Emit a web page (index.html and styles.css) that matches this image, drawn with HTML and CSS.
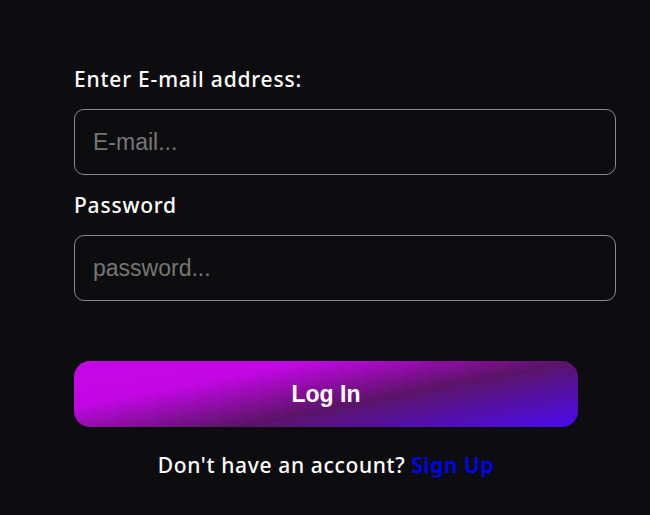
FILE: index.html
```html
<!DOCTYPE html>
<html lang="en">
<head>
<meta charset="utf-8">
<title>Log In</title>
<link rel="stylesheet" href="styles.css">
</head>
<body>
<form class="login-form">
  <label class="field-label" for="email">Enter E-mail address:</label>
  <input class="field-input" id="email" type="email" placeholder="E-mail...">
  <label class="field-label" for="password">Password</label>
  <input class="field-input" id="password" type="password" placeholder="password...">
  <div class="actions">
    <button class="login-btn" type="button">Log In</button>
    <p class="signup-text">Don't have an account? <a class="signup-link" href="#">Sign Up</a></p>
  </div>
</form>
</body>
</html>
```

FILE: styles.css
```css
html, body {
  margin: 0;
  padding: 0;
  background: #0d0d0f;
}

body {
  font-family: "Noto Sans", "Open Sans", sans-serif;
  color: #ffffff;
}

.login-form {
  width: 542px;
  margin-left: 74px;
  padding-top: 67px;
  display: flex;
  flex-direction: column;
  gap: 18px;
}

.field-label {
  display: block;
  height: 24px;
  line-height: 25px;
  font-size: 21px;
  font-weight: 500;
  letter-spacing: 0.8px;
  color: #ffffff;
}

.field-input {
  box-sizing: border-box;
  width: 542px;
  height: 66px;
  margin: 0;
  padding: 0 18px;
  border: 1px solid #8a8a8a;
  border-radius: 10px;
  background: #0d0d0f;
  color: #ffffff;
  font-family: "Liberation Sans", Arial, sans-serif;
  font-size: 23px;
  outline: none;
}

.field-input::placeholder {
  color: #767676;
}

.actions {
  width: 504px;
  margin-top: 42px;
  display: flex;
  flex-direction: column;
  align-items: center;
}

.login-btn {
  width: 504px;
  height: 66px;
  border: none;
  border-radius: 16px;
  background: linear-gradient(169deg, #c507e6 0%, #c207e4 28%, #5b1468 59%, #4a0af0 100%);
  color: #ffffff;
  font-family: "Liberation Sans", Arial, sans-serif;
  font-size: 23px;
  font-weight: 700;
  cursor: pointer;
}

.signup-text {
  margin: 26px 0 0;
  height: 24px;
  line-height: 25px;
  font-size: 21px;
  font-weight: 500;
  letter-spacing: 0.65px;
  color: #ffffff;
}

.signup-link {
  color: #0000ff;
  font-weight: 600;
  text-decoration: none;
}
```
